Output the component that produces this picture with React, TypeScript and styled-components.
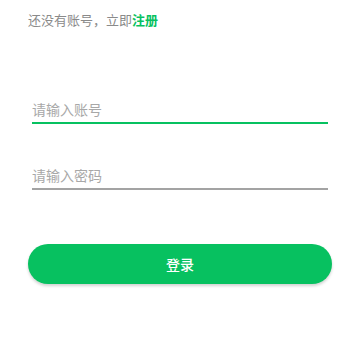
import React from "react";
import styled, { createGlobalStyle } from "styled-components";

const Global = createGlobalStyle`
  html, body { margin: 0; padding: 0; background: #ffffff; }
  body { font-family: "Noto Sans CJK SC", "Noto Sans", sans-serif; }
  * { box-sizing: border-box; }
`;

const Page = styled.div`
  width: 360px;
  height: 360px;
  padding: 10px 28px 0;
  display: flex;
  flex-direction: column;
  background: #fff;
`;

const Hint = styled.div`
  height: 20px;
  line-height: 20px;
  font-size: 13px;
  color: #8a8a8a;
`;

const Link = styled.a`
  color: #07c160;
  font-weight: 600;
  text-decoration: none;
`;

const Form = styled.div`
  display: flex;
  flex-direction: column;
  gap: 40px;
  padding: 0 4px;
  margin-top: 68px;
`;

const Field = styled.input<{ $active?: boolean }>`
  display: block;
  width: 100%;
  height: 26px;
  padding: 0 0 2px;
  margin: 0;
  border: none;
  border-bottom: 2px solid ${(p) => (p.$active ? "#07c160" : "#a3a3a3")};
  outline: none;
  background: transparent;
  font-family: "Noto Sans CJK SC", "Noto Sans", sans-serif;
  font-size: 14px;
  line-height: 24px;
  color: #333;
  &::placeholder {
    color: #a8a8a8;
  }
`;

const Button = styled.button`
  margin-top: 54px;
  width: 304px;
  height: 40px;
  border: none;
  border-radius: 20px;
  background: #07c160;
  color: #fff;
  font-family: "Noto Sans CJK SC", "Noto Sans", sans-serif;
  font-size: 14px;
  font-weight: 500;
  letter-spacing: 0;
  box-shadow: 0 2px 3px rgba(0, 0, 0, 0.18);
  cursor: pointer;
`;

export default function App() {
  return (
    <>
      <Global />
      <Page>
        <Hint>
          还没有账号，立即<Link href="#">注册</Link>
        </Hint>
        <Form>
          <Field $active placeholder="请输入账号" />
          <Field type="password" placeholder="请输入密码" />
        </Form>
        <Button>登录</Button>
      </Page>
    </>
  );
}
